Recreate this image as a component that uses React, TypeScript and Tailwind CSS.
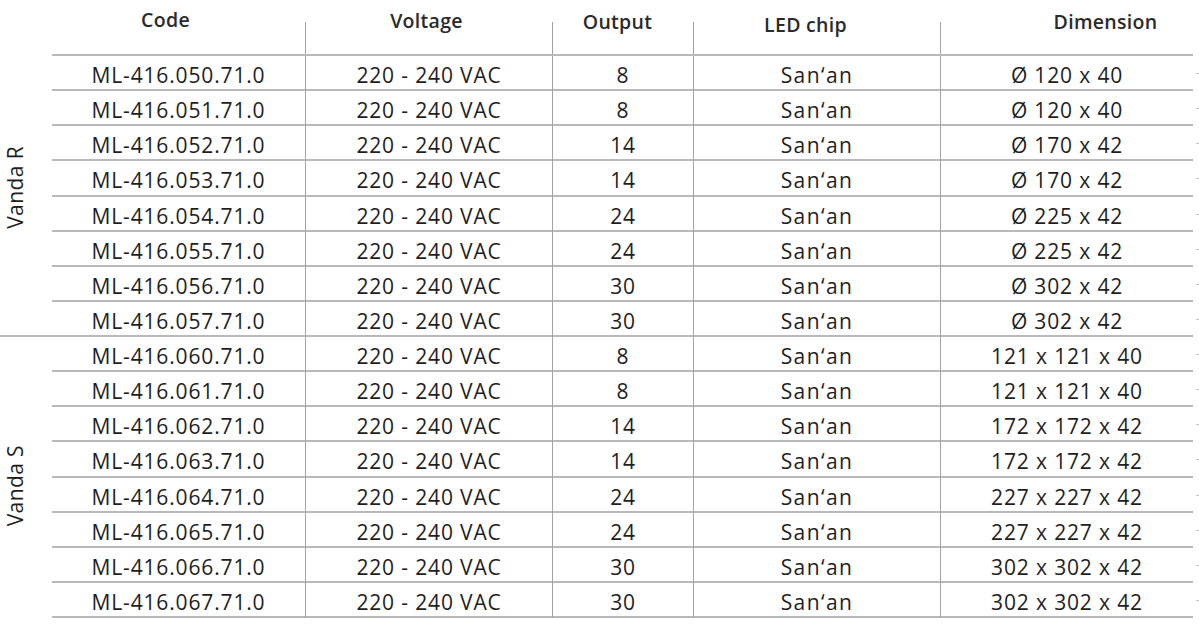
import React from "react";

type Row = { code: string; output: string; dim: string };

const outputs = ["8", "8", "14", "14", "24", "24", "30", "30"];
const dimsR = ["Ø 120 x 40", "Ø 120 x 40", "Ø 170 x 42", "Ø 170 x 42", "Ø 225 x 42", "Ø 225 x 42", "Ø 302 x 42", "Ø 302 x 42"];
const dimsS = ["121 x 121 x 40", "121 x 121 x 40", "172 x 172 x 42", "172 x 172 x 42", "227 x 227 x 42", "227 x 227 x 42", "302 x 302 x 42", "302 x 302 x 42"];

const groupR: Row[] = outputs.map((o, i) => ({ code: `ML-416.05${i}.71.0`, output: o, dim: dimsR[i] }));
const groupS: Row[] = outputs.map((o, i) => ({ code: `ML-416.06${i}.71.0`, output: o, dim: dimsS[i] }));

const gridCols = "grid grid-cols-[253px_247px_141px_247px_253px]";

function DataRow({ r }: { r: Row }) {
  const cell = "flex items-center justify-center pt-[4px] border-l border-[#a3a3a3]";
  return (
    <div className={`${gridCols} h-[35.125px] border-b-2 border-[#b9b9b9]`}>
      <div className="flex items-center justify-center pt-[4px]">{r.code}</div>
      <div className={cell}>220 - 240 VAC</div>
      <div className={cell}>{r.output}</div>
      <div className={`${cell} tracking-[1.4px]`}>San‘an</div>
      <div className={cell}>{r.dim}</div>
    </div>
  );
}

function Ticks() {
  return (
    <div className="flex w-[6px] flex-col">
      {outputs.map((_, i) => (
        <div key={i} className="flex h-[35.125px] items-center justify-end">
          <div className="h-px w-[3px] bg-[#c4c4c4]" />
        </div>
      ))}
    </div>
  );
}

function Group({ label, rows, first }: { label: string; rows: Row[]; first: boolean }) {
  return (
    <div className="flex">
      <div
        className={`flex h-[281px] w-[52px] items-center pl-[3px] ${first ? "border-b-2 border-[#b9b9b9] pb-[16px]" : "pt-[17px]"}`}
      >
        <span className="rotate-180 leading-[24px] tracking-[0.4px] [writing-mode:vertical-rl]">{label}</span>
      </div>
      <div className="flex w-[1141px] flex-col">
        {rows.map((r) => (
          <DataRow key={r.code} r={r} />
        ))}
      </div>
      <Ticks />
    </div>
  );
}

function HeadCell({ text, cls, line }: { text: string; cls: string; line: boolean }) {
  return (
    <div className="flex h-full">
      {line && <div className="mt-[22px] w-px bg-[#a3a3a3]" />}
      <div className={`flex flex-1 justify-center ${cls}`}>
        <span className="leading-[24px]">{text}</span>
      </div>
    </div>
  );
}

export default function App() {
  return (
    <div className="h-[624px] w-[1199px] overflow-hidden bg-white font-['Open_Sans',sans-serif] text-[21px] tracking-[0.85px] text-[#1e1e1e]">
      <div className="flex h-[56px]">
        <div className="w-[52px]" />
        <div className={`${gridCols} h-[56px] w-[1141px] border-b-2 border-[#b9b9b9] text-[19.5px] font-semibold tracking-[0.3px] text-[#2a2a2a]`}>
          <HeadCell text="Code" cls="pt-[8px] pr-[26px]" line={false} />
          <HeadCell text="Voltage" cls="pt-[9px] pr-[5px]" line={true} />
          <HeadCell text="Output" cls="pt-[10px] pr-[11px]" line={true} />
          <HeadCell text="LED chip" cls="pt-[13px] pr-[23px]" line={true} />
          <HeadCell text="Dimension" cls="pt-[10px] pl-[77px]" line={true} />
        </div>
      </div>
      <Group label="Vanda R" rows={groupR} first={true} />
      <Group label="Vanda S" rows={groupS} first={false} />
    </div>
  );
}
